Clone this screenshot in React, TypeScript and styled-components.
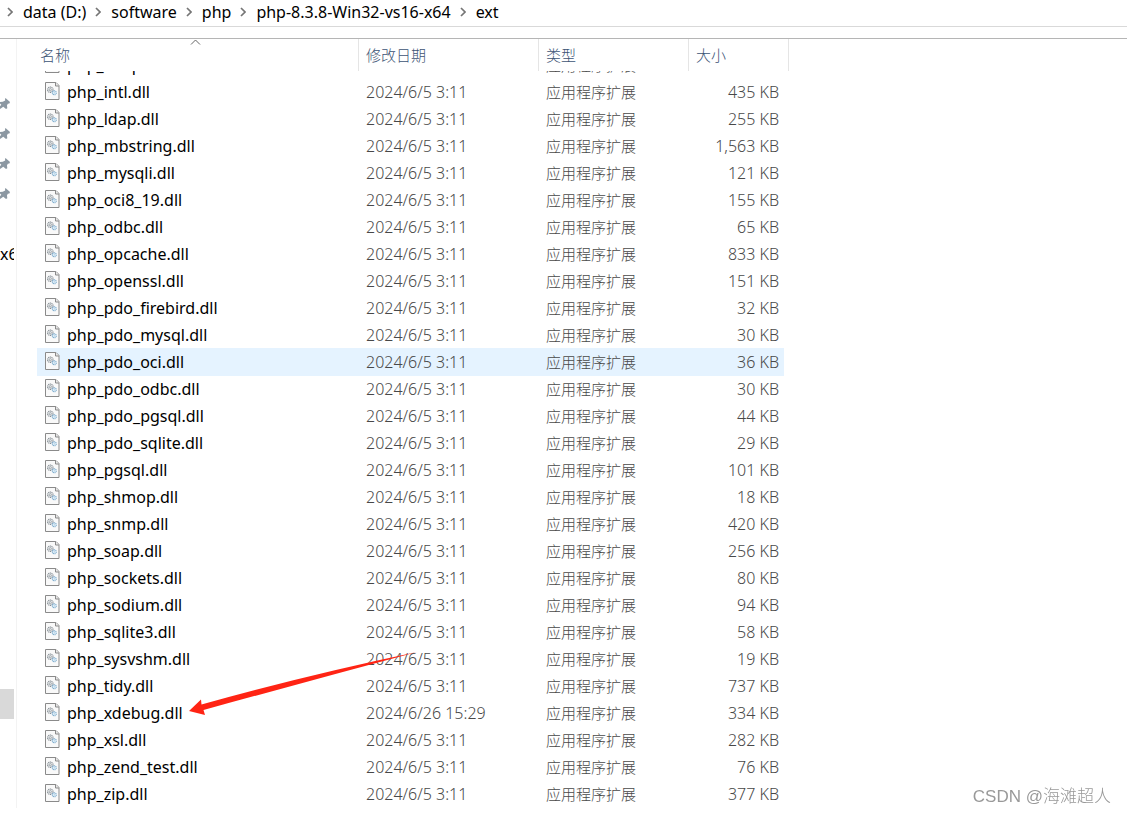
import React from "react";
import styled, { createGlobalStyle, css } from "styled-components";

const GlobalStyle = createGlobalStyle`
  * { box-sizing: border-box; }
  body {
    margin: 0;
    background: #fff;
    color: #000;
    font: 16px/20px "Noto Sans", "Noto Sans CJK SC", sans-serif;
    overflow: hidden;
  }
`;

const Page = styled.div`
  min-height: 100vh;
  display: flex;
  flex-direction: column;
`;

const PathBar = styled.nav`
  height: 27px;
  border-bottom: 1px solid #d9d9d9;
  display: flex;
  align-items: center;
  padding-left: 7px;
  overflow: hidden;
`;

const Crumb = styled.a`
  color: #000;
  text-decoration: none;
  white-space: nowrap;
  margin: 0 9px 2px 10px;
`;

const Chevron = styled.svg`
  flex: none;
  width: 6px;
  height: 10px;
  margin-bottom: 2px;
  fill: none;
  stroke: #757575;
  stroke-width: 1.7;
`;

const Body = styled.div`
  margin-top: 11px;
  border-top: 1px solid #b5b5b5;
  display: flex;
  flex: 1;
  align-items: flex-start;
`;

const Sidebar = styled.aside`
  flex: none;
  width: 17px;
  border-right: 1px solid #f3f3f3;
  padding: 50px 2px 89px 0;
  overflow: hidden;
`;

const TreeItem = styled.div<{ $selected?: boolean }>`
  height: 30px;
  display: flex;
  align-items: center;
  overflow: hidden;
  white-space: nowrap;
  background: ${(p) => (p.$selected ? "#d9d9d9" : "transparent")};
`;

const PinSvg = styled.svg`
  flex: none;
  width: 10px;
  height: 12px;
  fill: #8c98a2;
`;

const Main = styled.main`
  flex: 1;
  min-width: 0;
  position: relative;
  padding-left: 20px;
`;

const Files = styled.table`
  display: block;
  width: 752px;
`;

const Head = styled.thead`
  display: block;
`;

const columns = css`
  display: grid;
  grid-template-columns: 322px 180px 150px 1fr;
`;

const HeadRow = styled.tr`
  ${columns}
  height: 32px;
`;

const HeadCell = styled.th<{ $first?: boolean }>`
  position: relative;
  padding: 6px 0 0 ${(p) => (p.$first ? 3 : 7)}px;
  border-right: 1px solid #e5e5e5;
  color: #3c5374;
  font-size: 15px;
  font-weight: 300;
  text-align: left;
`;

const SortMark = styled.svg`
  position: absolute;
  left: 153px;
  top: 0;
  width: 11px;
  height: 6px;
  fill: none;
  stroke: #666;
`;

const Rows = styled.tbody`
  display: block;
  overflow: hidden;
`;

const Row = styled.tr<{ $hover?: boolean }>`
  ${columns}
  width: 747px;
  height: 27px;
  background: ${(p) => (p.$hover ? "#e5f3ff" : "transparent")};
  box-shadow: ${(p) => (p.$hover ? "0 1px #e5f3ff" : "none")};
  &:first-child {
    margin-top: -20px;
  }
`;

const Cell = styled.td<{ $right?: boolean }>`
  padding: 4px 5px 0 7px;
  color: #484848;
  white-space: nowrap;
  font-weight: 300;
  text-align: ${(p) => (p.$right ? "right" : "left")};
`;

const TypeCell = styled(Cell)`
  font-size: 15px;
`;

const NameCell = styled.td`
  display: flex;
  align-items: flex-start;
  gap: 7px;
  padding: 4px 0 0 8px;
  white-space: nowrap;
`;

const DllSvg = styled.svg`
  flex: none;
  width: 15px;
  height: 18px;
`;

const Arrow = styled.svg`
  position: absolute;
  left: 172px;
  top: 610px;
  width: 230px;
  height: 72px;
  fill: #ff2414;
  pointer-events: none;
`;

const Watermark = styled.div`
  position: fixed;
  right: 16px;
  bottom: 5px;
  color: #999;
  font: 300 17px/24px "Liberation Sans", "Noto Sans CJK SC", sans-serif;
`;

const PinIcon = () => (
  <PinSvg viewBox="0 0 10 12" aria-hidden="true">
    <path d="M5.500 0L10 4l-.6 1.500-1.600.3-.8 1.700.3 2.700L6 11 3.300 8.700 0 11V8.300l1.300-1.500L0 5.500V4l2.800-.2L5.200 2.500 5 1z" />
  </PinSvg>
);

const DllIcon = () => (
  <DllSvg viewBox="0 0 15 18" aria-hidden="true">
    <path d="M.5.500h10.500l3 3v14H.5z" fill="#f9f9f9" stroke="#8a8a8a" />
    <path d="M10.500.500v3.500h3.500" fill="#e8e8e8" stroke="#8a8a8a" />
    <circle cx="5.300" cy="7.700" r="2.700" fill="#eef0f1" stroke="#848d94" strokeWidth="1.200" strokeDasharray="1.100 .6" />
    <circle cx="5.300" cy="7.700" r="1.100" fill="none" stroke="#848d94" strokeWidth=".7" />
    <circle cx="9.300" cy="10.800" r="2" fill="#e3f1fa" stroke="#7aa9cb" strokeWidth="1.100" strokeDasharray="1.100 .5" />
    <circle cx="9.300" cy="10.800" r=".6" fill="#9fc4df" />
  </DllSvg>
);

const ChevronIcon = () => (
  <Chevron viewBox="0 0 6 10" aria-hidden="true">
    <path d="M1 1l4 4-4 4" />
  </Chevron>
);

const path = ["data (D:)", "software", "php", "php-8.3.8-Win32-vs16-x64", "ext"];

const files: [string, string][] = [
  ["imap", "90"],
  ["intl", "435"],
  ["ldap", "255"],
  ["mbstring", "1,563"],
  ["mysqli", "121"],
  ["oci8_19", "155"],
  ["odbc", "65"],
  ["opcache", "833"],
  ["openssl", "151"],
  ["pdo_firebird", "32"],
  ["pdo_mysql", "30"],
  ["pdo_oci", "36"],
  ["pdo_odbc", "30"],
  ["pdo_pgsql", "44"],
  ["pdo_sqlite", "29"],
  ["pgsql", "101"],
  ["shmop", "18"],
  ["snmp", "420"],
  ["soap", "256"],
  ["sockets", "80"],
  ["sodium", "94"],
  ["sqlite3", "58"],
  ["sysvshm", "19"],
  ["tidy", "737"],
  ["xdebug", "334"],
  ["xsl", "282"],
  ["zend_test", "76"],
  ["zip", "377"],
];

const tree = Array.from({ length: 21 }, (_, i) => i);

export default function App() {
  return (
    <Page>
      <GlobalStyle />
      <PathBar>
        {path.map((p) => (
          <React.Fragment key={p}>
            <ChevronIcon />
            <Crumb href="#">{p}</Crumb>
          </React.Fragment>
        ))}
      </PathBar>
      <Body>
        <Sidebar>
          {tree.map((i) => (
            <TreeItem key={i} $selected={i === 20}>
              {i < 4 && <PinIcon />}
              {i === 5 && "x64"}
            </TreeItem>
          ))}
        </Sidebar>
        <Main>
          <Files>
            <Head>
              <HeadRow>
                <HeadCell $first>
                  名称
                  <SortMark viewBox="0 0 11 6" aria-hidden="true">
                    <path d="M1 5.500L5.500 1 10 5.500" />
                  </SortMark>
                </HeadCell>
                <HeadCell>修改日期</HeadCell>
                <HeadCell>类型</HeadCell>
                <HeadCell>大小</HeadCell>
              </HeadRow>
            </Head>
            <Rows>
              {files.map(([name, size]) => (
                <Row key={name} $hover={name === "pdo_oci"}>
                  <NameCell>
                    <DllIcon />
                    php_{name}.dll
                  </NameCell>
                  <Cell>{name === "xdebug" ? "2024/6/26 15:29" : "2024/6/5 3:11"}</Cell>
                  <TypeCell>应用程序扩展</TypeCell>
                  <Cell $right>{name === "imap" ? "" : `${size} KB`}</Cell>
                </Row>
              ))}
            </Rows>
          </Files>
          <Arrow viewBox="0 0 230 72" aria-hidden="true">
            <path d="M0 62L12 50.500L12.500 55.500Q118 26 228 3Q120 32 14.500 61L16 66z" />
          </Arrow>
        </Main>
      </Body>
      <Watermark>CSDN @海滩超人</Watermark>
    </Page>
  );
}
